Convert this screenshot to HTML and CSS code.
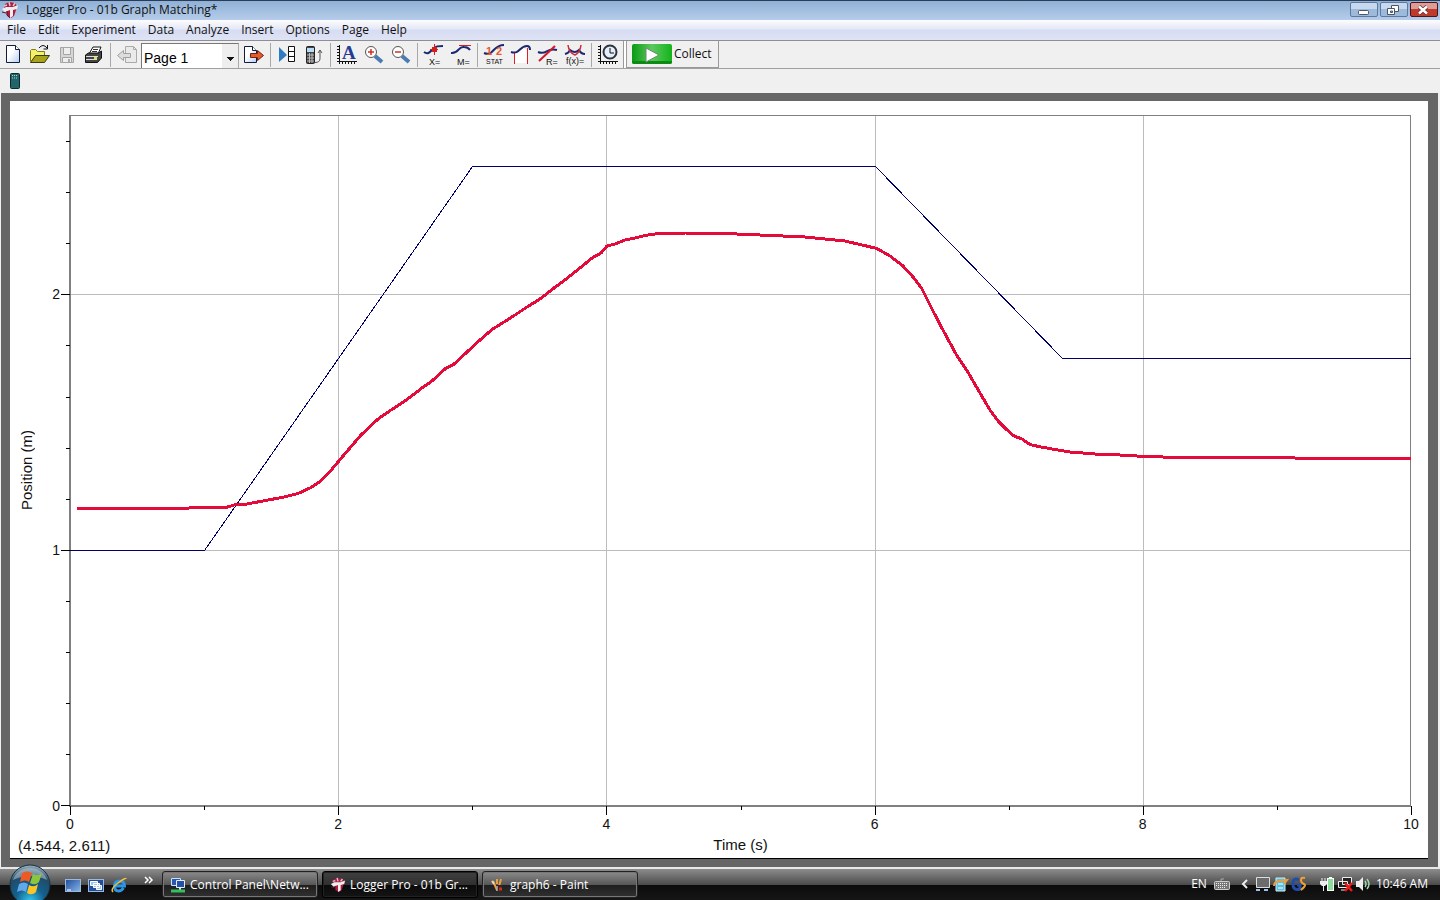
FILE: index.html
```html
<!DOCTYPE html>
<html lang="en">
<head>
    <meta charset="UTF-8">
    <meta name="viewport" content="width=device-width, initial-scale=1.0">
    <title>Logger Pro - 01b Graph Matching*</title>
    <link rel="stylesheet" href="styles.css">
</head>
<body>
    <svg class="defs" width="0" height="0" aria-hidden="true">
        <defs>
            <linearGradient id="page-fill" x1="0" y1="0" x2="1" y2="1">
                <stop offset="0.4" stop-color="#fff"/>
                <stop offset="1" stop-color="#b4cdf5"/>
            </linearGradient>
            <linearGradient id="go-fill" x1="0" y1="0" x2="1" y2="0">
                <stop offset="0" stop-color="#0a9a12"/>
                <stop offset="0.5" stop-color="#5cc860"/>
                <stop offset="1" stop-color="#12b41a"/>
            </linearGradient>
            <linearGradient id="screen-fill" x1="0" y1="0" x2="1" y2="1">
                <stop offset="0" stop-color="#1d4c9c"/>
                <stop offset="1" stop-color="#8ab6ea"/>
            </linearGradient>
            <radialGradient id="orb-fill" cx="0.5" cy="0.9" r="0.9">
                <stop offset="0" stop-color="#35c8ee"/>
                <stop offset="0.4" stop-color="#14608e"/>
                <stop offset="0.75" stop-color="#214a66"/>
                <stop offset="1" stop-color="#9fb6c4"/>
            </radialGradient>
            <symbol id="logo" viewBox="0 0 18 18">
                <path d="M4 3l4-2 6 1 2 3-1 4-2 6-3 2-4-2-1-6-2-2z" fill="#b01c40"/>
                <path d="M1 8l4-2h7l5-2-1 4-4 1v6l-3 2V9L4 11z" fill="#eee"/>
                <path d="M3 5l3-1M8 1l1 4M14 2l-2 3" stroke="#dcc8d0" stroke-width="1.500"/>
                <path d="M1 11l4 1M6 10v4l3 3" stroke="#5a1830" fill="none"/>
            </symbol>
        </defs>
    </svg>

    <header class="titlebar">
        <svg class="app-icon" width="18" height="18"><use href="#logo"/></svg>
        <h1>Logger Pro - 01b Graph Matching*</h1>
        <div class="window-buttons">
            <button type="button" aria-label="Minimize">
                <svg width="26" height="14" viewBox="0 0 26 14"><rect x="7.500" y="7.500" width="10" height="4" rx="1" fill="#fff" stroke="#4a5566"/></svg>
            </button>
            <button type="button" aria-label="Restore">
                <svg width="26" height="14" viewBox="0 0 26 14"><path d="M10.500 2.500h7v6h-7z" fill="#fff" stroke="#4a5566"/><path d="M6.500 5.500h7v6h-7z" fill="#fff" stroke="#4a5566"/><path d="M9.500 8h2v1.500h-2z" fill="#9bb" stroke="#4a5566"/></svg>
            </button>
            <button type="button" class="close" aria-label="Close">
                <svg width="26" height="14" viewBox="0 0 26 14"><path d="M8 3.500l8 7M16 3.500l-8 7" stroke="#5a3038" stroke-width="4"/><path d="M8 3.500l8 7M16 3.500l-8 7" stroke="#fff" stroke-width="2.500"/></svg>
            </button>
        </div>
    </header>

    <nav class="menubar">
        <button type="button">File</button>
        <button type="button">Edit</button>
        <button type="button">Experiment</button>
        <button type="button">Data</button>
        <button type="button">Analyze</button>
        <button type="button">Insert</button>
        <button type="button">Options</button>
        <button type="button">Page</button>
        <button type="button">Help</button>
    </nav>

    <div class="toolbar">
        <button type="button" class="tool" aria-label="New">
            <svg viewBox="0 0 27 26"><path d="M6.500 3.500h9l4 4v13h-13z" fill="url(#page-fill)" stroke="#111c3c"/><path d="M15.500 3.500v4h4" fill="#fff" stroke="#111c3c"/></svg>
        </button>
        <button type="button" class="tool" aria-label="Open">
            <svg viewBox="0 0 27 26"><path d="M3.500 19.500v-11l1-1h4l2 2h7v4" fill="#f4f06a" stroke="#7d7a10"/><path d="M3.500 20.500l5-7h14l-5 7z" fill="#a8a21c" stroke="#3c3a06"/><path d="M12 6q4-5 8 0M20.500 3v4h-4" fill="none" stroke="#111"/></svg>
        </button>
        <button type="button" class="tool" aria-label="Save" disabled>
            <svg viewBox="0 0 27 26"><path d="M6.500 5.500h13v15h-13z" fill="#d6d6d6" stroke="#a4a4a4"/><path d="M9.500 5.500h7v7h-7zM8.500 15.500h9v5h-9z" fill="#eee" stroke="#a4a4a4"/><path d="M14 17h2v3h-2z" fill="#aaa"/></svg>
        </button>
        <button type="button" class="tool" aria-label="Print">
            <svg viewBox="0 0 27 26"><path d="M8 12l4-7h8l-3 7z" fill="#fff" stroke="#111"/><path d="M12 7.500h5M11 9.500h5" stroke="#333"/><path d="M4.500 13l3-2h10l3-2v7l-4 4.500h-12z" fill="#444" stroke="#111"/><path d="M5 14.500h12M5 17.500h11" stroke="#ddd"/><path d="M13 16h3" stroke="#e6dc3c" stroke-width="2"/></svg>
        </button>
        <span class="sep"></span>
        <button type="button" class="tool" aria-label="Previous page" disabled>
            <svg viewBox="0 0 27 26"><path d="M11.500 4.500h8l3 3v13h-11z" fill="#eaeaea" stroke="#aaa"/><path d="M19.500 4.500v3h3" fill="none" stroke="#aaa"/><path d="M3.500 13.500l6-5v3h7v4h-7v3z" fill="#ddd" stroke="#a0a0a0"/></svg>
        </button>
        <select class="page-select" aria-label="Page">
            <option>Page 1</option>
        </select>
        <button type="button" class="tool" aria-label="Next page">
            <svg viewBox="0 0 27 26"><path d="M3.500 4.500h8l4 4v12h-12z" fill="url(#page-fill)" stroke="#111c3c"/><path d="M11.500 4.500v4h4" fill="#fff" stroke="#111c3c"/><path d="M9.500 11.500h7v-3l6 5-6 5v-3h-7z" fill="#e85a28" stroke="#6e2410"/></svg>
        </button>
        <span class="sep"></span>
        <button type="button" class="tool" aria-label="Data browser">
            <svg viewBox="0 0 27 26"><path d="M5 5v15l8-7z" fill="#2f7cc0"/><path d="M14.500 4.500h6v15h-6zM14.500 9.500h6M14.500 14.500h6" fill="#fff" stroke="#111"/></svg>
        </button>
        <button type="button" class="tool" aria-label="Import from calculator">
            <svg viewBox="0 0 27 26"><rect x="5.500" y="4.500" width="8" height="17" rx="1" fill="#444" stroke="#222"/><path d="M6 6h7v4H6z" fill="#b8dcf4"/><path d="M6 13h7M6 16h7M6 19h7M8.500 11v10M11 11v10" stroke="#bbb"/><path d="M14 20.500q5 0 5-4V8M17 11l2-3 2 3" fill="none" stroke="#555"/></svg>
        </button>
        <span class="sep"></span>
        <button type="button" class="tool" aria-label="Autoscale">
            <svg viewBox="0 0 27 26"><path d="M5.500 3v19M3 19.500h20M3 4.500h3M3 7.500h3M3 10.500h3M3 13.500h3M3 16.500h3M8.500 19v3M11.500 19v3M14.500 19v3M17.500 19v3M20.500 19v3" stroke="#111"/><text x="8" y="17" class="serif-glyph">A</text></svg>
        </button>
        <button type="button" class="tool" aria-label="Zoom in">
            <svg viewBox="0 0 27 26"><path d="M14 14l7 6" stroke="#4a7cb4" stroke-width="4"/><circle cx="10" cy="10" r="5.500" fill="#fff" stroke="#555"/><path d="M7 10h6M10 7v6" stroke="#d03020" stroke-width="1.500"/></svg>
        </button>
        <button type="button" class="tool" aria-label="Zoom out">
            <svg viewBox="0 0 27 26"><path d="M14 14l7 6" stroke="#4a7cb4" stroke-width="4"/><circle cx="10" cy="10" r="5.500" fill="#fff" stroke="#555"/><path d="M7 10h6" stroke="#d03020" stroke-width="1.500"/></svg>
        </button>
        <span class="sep"></span>
        <button type="button" class="tool" aria-label="Examine">
            <svg viewBox="0 0 27 26"><path d="M3 10c4 3 6 0 9-3s5-3 10-3" fill="none" stroke="#1c2870" stroke-width="2"/><path d="M13.500 2v11M9 7.500h8" stroke="#d02020"/><path d="M11 5h5v5h-5z" fill="#d02020"/><text x="8" y="23" class="small-glyph">X=</text></svg>
        </button>
        <button type="button" class="tool" aria-label="Tangent">
            <svg viewBox="0 0 27 26"><path d="M3 11c8 1 7-7 13-6q4 0 6 3" fill="none" stroke="#1c2870" stroke-width="2"/><path d="M11 3.500h12" stroke="#d02020"/><text x="9" y="23" class="small-glyph">M=</text></svg>
        </button>
        <span class="sep"></span>
        <button type="button" class="tool" aria-label="Statistics">
            <svg viewBox="0 0 27 26"><path d="M3 11c10 4 8-8 20-8" fill="none" stroke="#1c2870" stroke-width="2"/><text x="5" y="13" class="stat-glyph">1</text><text x="15" y="13" class="stat-glyph">2</text><text x="5" y="22" class="stat-label">STAT</text></svg>
        </button>
        <button type="button" class="tool" aria-label="Integral">
            <svg viewBox="0 0 27 26"><path d="M7 11l8-5 5 2v13H7z" fill="#fff"/><path d="M6.500 11v11M19.500 6v16" stroke="#e02020"/><path d="M3 10c9 3 8-6 16-6q3 0 3 4" fill="none" stroke="#1c2870" stroke-width="2"/></svg>
        </button>
        <button type="button" class="tool" aria-label="Linear fit">
            <svg viewBox="0 0 27 26"><path d="M3 10c9 4 8-5 19-2" fill="none" stroke="#1c2870" stroke-width="2"/><path d="M4 19L20 4" stroke="#d01828" stroke-width="2"/><text x="11" y="23" class="small-glyph">R=</text></svg>
        </button>
        <button type="button" class="tool" aria-label="Curve fit">
            <svg viewBox="0 0 27 26"><path d="M3 12q4-1 5-4 5 4 9 0 2 4 6 4" fill="none" stroke="#1c2870" stroke-width="2"/><path d="M6 3q1 8 7 10 5-2 6-10" fill="none" stroke="#d02838" stroke-width="1.500"/><text x="4" y="22" class="small-glyph">f(x)=</text></svg>
        </button>
        <span class="sep"></span>
        <button type="button" class="tool" aria-label="Data collection">
            <svg viewBox="0 0 27 26"><path d="M5.500 3v19M3 19.500h20M3 4.500h3M3 7.500h3M3 10.500h3M3 13.500h3M3 16.500h3M8.500 19v3M11.500 19v3M14.500 19v3M17.500 19v3M20.500 19v3" stroke="#111"/><circle cx="15" cy="10" r="6.500" fill="#e4eefa" stroke="#2c3440" stroke-width="2"/><path d="M15 6v5h4" fill="none" stroke="#111"/></svg>
        </button>
        <span class="edge"></span>
        <button type="button" class="collect">
            <svg width="40" height="20" viewBox="0 0 40 20"><rect width="40" height="20" rx="2" fill="url(#go-fill)"/><path d="M0 17h40v1q0 2-2 2H2q-2 0-2-2z" fill="#0c8a14"/><path d="M14 4v14l13-7z" fill="#fff" stroke="#6a8c6c"/></svg>
            Collect
        </button>
    </div>

    <div class="sensorbar">
        <button type="button" aria-label="LabPro">
            <svg width="10" height="16" viewBox="0 0 10 16"><rect x="0.500" y="0.500" width="9" height="15" rx="1" fill="#226468" stroke="#0a2c30"/><path d="M2 2.500h6M2 5h6" stroke="#a8dcdc" stroke-dasharray="1 1"/></svg>
        </button>
    </div>

    <main class="workspace">
        <section class="page">
            <div class="graph">
                <div class="y-title">Position (m)</div>
                <div class="y-labels">
                    <span class="top">2</span>
                    <span>1</span>
                    <span>0</span>
                </div>
                <div class="plot">
                    <svg viewBox="0 0 1341 691" preserveAspectRatio="none" role="img" aria-label="Position against time">
                        <path class="grid" d="M268.500 0V691M536.500 0V691M805.500 0V691M1073.500 0V691M0 179.500H1341M0 435.500H1341"/>
                        <path class="frame" d="M0 0.500H1341M1340.500 0V691"/>
                        <path class="axis" d="M0 0V691H1341"/>
                        <path class="ticks" d="M-9 179.500H0M-9 435.500H0M-9 690.500H0
                            M-4 26.500H0M-4 77.500H0M-4 128.500H0M-4 230.500H0M-4 282.500H0M-4 333.500H0M-4 384.500H0
                            M-4 486.500H0M-4 537.500H0M-4 588.500H0M-4 639.500H0
                            M0.500 691v9M268.500 691v9M536.500 691v9M805.500 691v9M1073.500 691v9M1341.500 691v9
                            M134.500 691v4M402.500 691v4M671.500 691v4M939.500 691v4M1207.500 691v4"/>
                        <polyline class="target" points="0,435.500 134.500,435.500 402.500,51.500 805.500,51.500 992.500,243.500 1341,243.500"/>
                        <polyline class="measured" points="7,393.500 117,393.500 121,392.500 156,392.500 166,389.500 177,389 201,384.500 214,382 228,378.500 240,373 250,366.500 260,356.500 276,337.500
                            291,320 308,304 321,295 335,286 352,273 362,266 376,253 383,250 397,237 410,225 422,214.500
                            434,207 445,200 457,192 470,184 484,173 495,165 510,153 522,143 531,138 537,131 545,129
                            555,125 565,123 575,120.500 585,119 600,118.500 615,118 655,118.500 690,120 735,122 755,124 775,126 790,129.500
                            807,133.500 820,141 832,150 844,163 852,174 862,194 874,217 886,239 899,259 910,278
                            920,295 928,306 936,314 944,321 952,324 960,329.500 971,332 985,334.500 1000,337 1025,339 1050,340
                            1075,341.500 1110,342.500 1220,342.500 1230,343.500 1341,343.500"/>
                    </svg>
                </div>
                <div class="x-labels">
                    <span>0</span>
                    <span>2</span>
                    <span>4</span>
                    <span>6</span>
                    <span>8</span>
                    <span>10</span>
                </div>
            </div>
            <footer class="page-footer">
                <span class="coords">(4.544, 2.611)</span>
                <span class="x-title">Time (s)</span>
            </footer>
        </section>
    </main>

    <div class="taskbar">
        <button type="button" class="start" aria-label="Start">
            <svg width="42" height="42" viewBox="0 0 42 42">
                <circle cx="21" cy="21" r="20" fill="url(#orb-fill)" stroke="#16303f"/>
                <path d="M4 16a18 18 0 0 1 34 0q-17-8-34 0z" fill="#c4d2da" opacity="0.500"/>
                <path d="M13 9q5-3 10 0l-3 9q-4-3-9 0z" fill="#ee5a24"/>
                <path d="M24 10q5 3 9-1l-3 9q-4 4-9 1z" fill="#8cc63e"/>
                <path d="M10 20q5-3 9 0l-2 8q-4-3-9 0z" fill="#62a8ea"/>
                <path d="M20 21q5 3 9-1l-2 8q-4 4-9 1z" fill="#fcc524"/>
            </svg>
        </button>
        <div class="quick-launch">
            <button type="button" aria-label="Show desktop">
                <svg width="16" height="14" viewBox="0 0 16 14"><rect x="0.500" y="1.500" width="15" height="12" fill="url(#screen-fill)" stroke="#9cb8dc"/><path d="M2 12h4" stroke="#fff"/></svg>
            </button>
            <button type="button" aria-label="Switch windows">
                <svg width="16" height="14" viewBox="0 0 16 14"><rect x="0.500" y="1.500" width="15" height="12" fill="#225098" stroke="#9cb8dc"/><path d="M2.500 3.500h7v4h-7zM5.500 5.500h6v4h-6zM8.500 7.500h5v4h-5z" fill="#9cc4ec" stroke="#fff"/></svg>
            </button>
            <button type="button" aria-label="Internet Explorer">
                <svg width="16" height="16" viewBox="0 0 16 16"><path d="M12.500 11q-2 3-5 3-4 0-4-5t5-5q5 0 5 5h-9" fill="none" stroke="#2c96e4" stroke-width="3"/><path d="M2 15q-3-3 5-9t8-4" fill="none" stroke="#f2c03c" stroke-width="1.500"/></svg>
            </button>
        </div>
        <button type="button" class="more" aria-label="More">
            <svg width="10" height="8" viewBox="0 0 10 8"><path d="M1 1l3 3-3 3M5 1l3 3-3 3" fill="none" stroke="#fff" stroke-width="1.500"/></svg>
        </button>
        <div class="tasks">
            <button type="button" class="task">
                <svg width="16" height="16" viewBox="0 0 16 16"><path d="M1.500 1.500h9v7h-9z" fill="#2858b0" stroke="#cfe0f4"/><path d="M6.500 3.500h8v7h-8z" fill="#2450a8" stroke="#e4eefa"/><path d="M10 11v3" stroke="#ddd" stroke-width="2"/><path d="M1 14h14" stroke="#30c060" stroke-width="3"/></svg>
                <span>Control Panel\Netw...</span>
            </button>
            <button type="button" class="task active">
                <svg width="16" height="16"><use href="#logo"/></svg>
                <span>Logger Pro - 01b Gr...</span>
            </button>
            <button type="button" class="task">
                <svg width="16" height="16" viewBox="0 0 16 16"><path d="M3 4l4 9M11 2L8 13M7 2v5" stroke="#e8a040" stroke-width="2"/><path d="M2 4l2 3" stroke="#e8d8b0" stroke-width="2"/><path d="M6 8h6l-1 7H7z" fill="#3a2420"/><path d="M7 9v5" stroke="#eee"/><path d="M9 12h3" stroke="#c83020" stroke-width="3"/></svg>
                <span>graph6 - Paint</span>
            </button>
        </div>
        <div class="tray">
            <span class="lang">EN</span>
            <svg width="16" height="12" viewBox="0 0 16 12"><path d="M7 4V1h3" fill="none" stroke="#aaa"/><rect x="0.500" y="3.500" width="15" height="8" rx="1" fill="#777" stroke="#ccc"/><path d="M2 5.500h12M2 7.500h12M4 9.500h8" stroke="#eee" stroke-dasharray="1 1"/></svg>
            <svg class="chevron" width="8" height="10" viewBox="0 0 8 10"><path d="M6 1L2 5l4 4" fill="none" stroke="#eee" stroke-width="2"/></svg>
            <div class="tray-icons">
                <svg width="16" height="16" viewBox="0 0 16 16"><path d="M1.500 1.500h13v10h-13z" fill="#6c6c6c" stroke="#ddd"/><path d="M1 14h4M9 14h4" stroke="#9cc0e8" stroke-width="2"/></svg>
                <svg width="16" height="16" viewBox="0 0 16 16"><path d="M3 2h9v13H3z" fill="#5cc0e0" stroke="#d4eef8"/><path d="M5 8h5M5 12h5" stroke="#fff"/><path d="M1 10q0-4 5-5l8-1-3 4" fill="none" stroke="#e8a040" stroke-width="2"/></svg>
                <svg width="16" height="16" viewBox="0 0 16 16"><path d="M8 4Q2 1 2 8t7 5V9H6" fill="none" stroke="#204ca8" stroke-width="3"/><path d="M14 2q-4-1-4 2t3 4-3 6" fill="none" stroke="#f0a030" stroke-width="2"/></svg>
            </div>
            <div class="tray-icons">
                <svg width="16" height="16" viewBox="0 0 16 16"><path d="M3 2v4M6 2v4M4.500 9v6" stroke="#eee"/><path d="M1 5h7v3l-2 2H3L1 8z" fill="#eee"/><rect x="8.500" y="2.500" width="6" height="12" fill="#8edc9c" stroke="#fff"/><path d="M10 1.500h3" stroke="#fff"/></svg>
                <svg width="16" height="16" viewBox="0 0 16 16"><path d="M5.500 1.500h9v7h-9zM1.500 5.500h9v6h-9z" fill="#222" stroke="#eee"/><path d="M4 14h5" stroke="#eee"/><path d="M8 7l7 8M15 7l-7 8" stroke="#f01818" stroke-width="2.500"/></svg>
                <svg width="16" height="16" viewBox="0 0 16 16"><path d="M1 5h3l4-4v14l-4-4H1z" fill="#eee"/><path d="M10 5q2 3 0 6M12 3q4 5 0 10" fill="none" stroke="#9cd8a8" stroke-width="1.500"/></svg>
            </div>
            <time>10:46 AM</time>
        </div>
    </div>
</body>
</html>
```

FILE: styles.css
```css
* {
    box-sizing: border-box;
}
body {
    margin: 0;
    min-height: 100vh;
    display: flex;
    flex-direction: column;
    background: #f0f0f0;
    color: #111;
    font-family: "Open Sans", "Noto Sans", sans-serif;
    font-size: 12px;
    line-height: 16px;
}
button {
    padding: 0;
    border: none;
    background: none;
    color: inherit;
    font: inherit;
}
svg {
    display: block;
    flex: none;
}
.defs {
    position: absolute;
}

/* window title */
.titlebar {
    display: flex;
    align-items: center;
    height: 20px;
    padding: 0 2px 2px 1px;
    border-top: 1px solid #2c3c54;
    background: linear-gradient(#8fb0d6, #b6cdea);
}
.titlebar h1 {
    margin: 0 0 0 7px;
    font-size: 12px;
    font-weight: normal;
}
.window-buttons {
    display: flex;
    gap: 2px;
    margin-left: auto;
}
.window-buttons button {
    width: 28px;
    height: 15px;
    border: 1px solid #5d7a9e;
    border-radius: 2px;
    background: linear-gradient(#c6d9ee 50%, #9dbadb 50%);
}
.window-buttons .close {
    border-color: #4a1420;
    background: linear-gradient(#dd9c94 50%, #c03a2c 50%);
}

.menubar {
    display: flex;
    gap: 12px;
    height: 21px;
    padding: 0 7px;
    border-bottom: 1px solid #8e8e96;
    background: linear-gradient(#fdfdff, #e4e8f6 45%, #d6dcf2 50%, #dfe3f5);
}

/* main toolbar */
.toolbar {
    display: flex;
    align-items: center;
    height: 28px;
    border-bottom: 1px solid #a0a0a0;
}
.tool {
    width: 27px;
    height: 26px;
}
.sep {
    width: 6px;
    height: 24px;
    background: linear-gradient(90deg, transparent 2px, #a8a8a8 2px, #a8a8a8 3px, transparent 3px);
}
.edge {
    width: 4px;
    height: 27px;
    border: solid #999;
    border-width: 0 1px;
    margin-left: 1px;
    background: #fff;
}
.small-glyph {
    font: 9px "Liberation Sans", sans-serif;
    fill: #111;
}
.stat-label {
    font: 7px "Liberation Sans", sans-serif;
    fill: #111;
}
.serif-glyph {
    font: bold 19px "Liberation Serif", serif;
    fill: #243c94;
}
.stat-glyph {
    font: bold 11px "Liberation Sans", sans-serif;
    fill: #e8582c;
}
.page-select {
    appearance: none;
    width: 98px;
    height: 25px;
    margin: 2px 2px 0 0;
    padding: 4px 0 0 2px;
    border: 1px solid #777;
    border-right-color: #aaa;
    border-radius: 0;
    border-bottom: none;
    background:
        linear-gradient(#111, #111) 85px 13px / 7px 1px no-repeat,
        linear-gradient(#111, #111) 86px 14px / 5px 1px no-repeat,
        linear-gradient(#111, #111) 87px 15px / 3px 1px no-repeat,
        linear-gradient(#111, #111) 88px 16px / 1px 1px no-repeat,
        linear-gradient(#eee, #eee) right / 16px 100% no-repeat,
        #fff;
    font: 14px "Liberation Sans", sans-serif;
}
.collect {
    display: flex;
    align-items: center;
    gap: 2px;
    height: 27px;
    padding: 0 6px 0 5px;
    border: solid #999;
    border-width: 0 1px 1px 0;
}

.sensorbar {
    display: flex;
    align-items: center;
    height: 24px;
    padding-left: 10px;
}

/* document area */
.workspace {
    flex: 1;
    display: flex;
    margin: 0 2px 0 1px;
    padding: 8px 10px 8px 9px;
    background: #666;
}
.page {
    flex: 1;
    display: flex;
    flex-direction: column;
    padding: 14px 17px 0 8px;
    border-bottom: 1px solid #000;
    background: #fff;
    font-family: "Liberation Sans", sans-serif;
    font-size: 14px;
}
.graph {
    flex: 1;
    display: grid;
    grid-template-columns: 18px 34px 1fr;
    grid-template-rows: 1fr 28px;
}
.y-title {
    justify-self: center;
    align-self: center;
    writing-mode: vertical-rl;
    transform: rotate(180deg);
    margin-bottom: -20px;
    font-size: 15px;
}
.y-labels {
    display: flex;
    flex-direction: column;
    padding-right: 10px;
    text-align: right;
}
.y-labels span {
    flex: 10;
    display: flex;
    align-items: flex-end;
    justify-content: flex-end;
    position: relative;
    top: 8px;
}
.y-labels .top {
    flex: 7;
}
.plot {
    position: relative;
}
.plot svg {
    position: absolute;
    width: 100%;
    height: 100%;
    overflow: visible;
    shape-rendering: crispEdges;
    fill: none;
}
.grid {
    stroke: #bcbcbc;
}
.frame {
    stroke: #808080;
}
.axis {
    stroke: #808080;
    stroke-width: 2;
}
.ticks {
    stroke: #000;
}
.target {
    stroke: #000068;
}
.measured {
    stroke: #e40a3a;
    stroke-width: 3;
    stroke-linejoin: round;
}
.x-labels {
    grid-column: 3;
    display: flex;
    justify-content: space-between;
    align-items: flex-end;
    padding-bottom: 2px;
}
.x-labels span {
    display: flex;
    justify-content: center;
    width: 0;
}
.page-footer {
    display: grid;
    grid-template-columns: 52px 1fr;
    height: 24px;
    align-items: center;
    font-size: 15px;
}
.coords {
    white-space: nowrap;
}
.x-title {
    padding-bottom: 2px;
    text-align: center;
}

/* taskbar */
.taskbar {
    display: flex;
    align-items: center;
    height: 33px;
    border-top: 2px solid #e8e8e8;
    background: linear-gradient(#8c8c8c, #4c4c4c 50%, #0c0c0c 52%, #161616);
    color: #fff;
}
.start {
    width: 42px;
    height: 31px;
    margin-left: 9px;
}
.start svg {
    margin-top: -5px;
}
.quick-launch {
    display: flex;
    align-items: center;
    gap: 7px;
    margin-left: 14px;
}
.more {
    align-self: flex-start;
    margin: 7px 8px 0 17px;
}
.tasks {
    display: flex;
    gap: 4px;
}
.task {
    display: flex;
    align-items: center;
    gap: 4px;
    width: 156px;
    height: 27px;
    padding: 0 7px;
    border: 1px solid #222;
    border-radius: 3px;
    box-shadow: inset 0 0 0 1px #777;
    background: linear-gradient(#8a8a8a, #585858 50%, #1e1e1e 52%, #303030);
    white-space: nowrap;
}
.task.active {
    border-color: #000;
    box-shadow: inset 0 0 0 1px #222;
    background: linear-gradient(#404040, #303030 50%, #0a0a0a 52%, #141414);
}
.tray {
    display: flex;
    align-items: center;
    margin-left: auto;
    padding: 0 12px 2px 0;
}
.lang {
    margin-right: 7px;
}
.chevron {
    margin: 0 6px 0 11px;
}
.tray-icons {
    display: flex;
    gap: 2px;
    margin-right: 12px;
}
.tray-icons + .tray-icons {
    margin-right: 5px;
}
```
